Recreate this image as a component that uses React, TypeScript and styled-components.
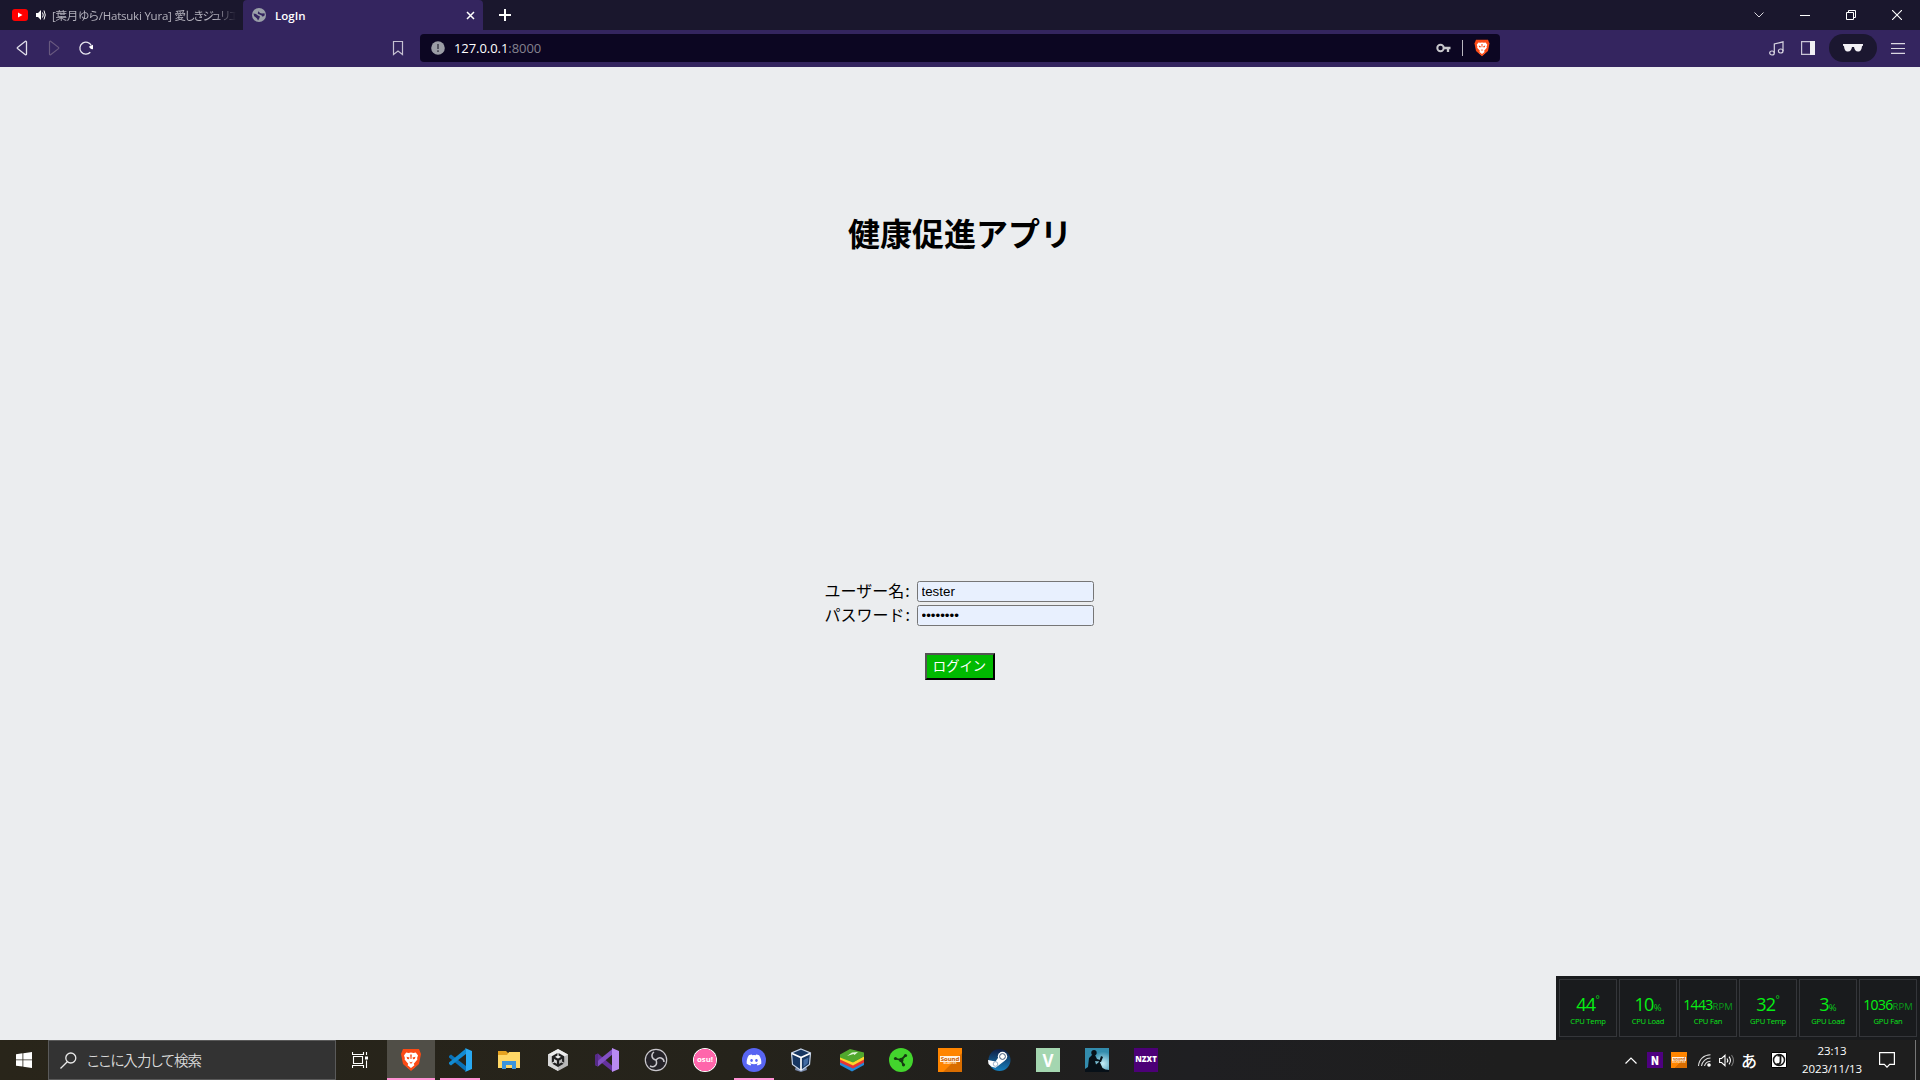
import React from 'react';
import styled, { createGlobalStyle } from 'styled-components';
import { SiBrave, SiUnity } from 'react-icons/si';
import { FaDiscord } from 'react-icons/fa';

const uiFont = '"Open Sans", "Noto Sans CJK JP", sans-serif';
const jpFont = '"Noto Sans CJK JP", sans-serif';

const GlobalStyle = createGlobalStyle`
  * { box-sizing: border-box; }
  body { margin: 0; overflow: hidden; background: #ebedef; font-family: ${uiFont}; }
  svg { display: block; flex: none; }
`;

const Screen = styled.div`
  display: flex;
  flex-direction: column;
  width: 1920px;
  height: 1080px;
  overflow: hidden;
`;

/* ---------- browser chrome ---------- */
const TabStrip = styled.header`
  display: flex;
  height: 30px;
  background: #1a172d;
  color: #fff;
`;
const Tab = styled.div<{ $active?: boolean }>`
  display: flex;
  align-items: center;
  width: ${p => (p.$active ? 240 : 243)}px;
  padding: ${p => (p.$active ? '0 8px 0 9px' : '0 7px 0 12px')};
  background: ${p => (p.$active ? '#34255f' : 'transparent')};
  border-radius: 4px 4px 0 0;
  font-size: 11.5px;
`;
const TabTitle = styled.span<{ $active?: boolean }>`
  flex: 1;
  overflow: hidden;
  white-space: nowrap;
  margin-left: ${p => (p.$active ? 9 : 6)}px;
  padding-top: 1px;
  line-height: 18px;
  font-weight: ${p => (p.$active ? 600 : 400)};
  color: ${p => (p.$active ? '#fff' : '#b4b2bd')};
  letter-spacing: ${p => (p.$active ? '0' : '-0.22px')};
  font-feature-settings: 'palt';
  mask-image: ${p => (p.$active ? 'none' : 'linear-gradient(to right, #000 88%, transparent)')};
`;
const Kana = styled.span`
  letter-spacing: -1.1px;
`;
const NewTab = styled.button`
  display: flex;
  align-items: center;
  justify-content: center;
  width: 44px;
  border: 0;
  padding: 0;
  background: none;
`;
const WindowControls = styled.div`
  display: flex;
  align-items: center;
  margin-left: auto;
`;
const WindowButton = styled.button`
  display: flex;
  align-items: center;
  justify-content: center;
  width: 46px;
  height: 28px;
  border: 0;
  padding: 0;
  background: none;
`;
const Toolbar = styled.nav`
  display: flex;
  align-items: center;
  height: 37px;
  padding: 0 15px 1px 14px;
  background: #34255f;
`;
const NavIcons = styled.div`
  display: flex;
  align-items: center;
  gap: 16px;
  width: 375px;
`;
const BookmarkSlot = styled.div`
  width: 31px;
`;
const AddressBar = styled.div`
  display: flex;
  align-items: center;
  width: 1080px;
  height: 28px;
  padding: 0 9px 0 11px;
  border-radius: 4px;
  background: #0c0622;
`;
const Url = styled.span`
  margin-left: 9px;
  flex: 1;
  color: #fff;
  font-size: 13px;
  line-height: 20px;
  letter-spacing: -0.06px;
  em { font-style: normal; color: #85828f; }
`;
const Divider = styled.span`
  width: 1px;
  height: 16px;
  margin: 0 10px 0 11px;
  background: #b9b7c0;
`;
const ToolbarEnd = styled.div`
  display: flex;
  align-items: center;
  margin-left: auto;
`;
const PrivatePill = styled.div`
  display: flex;
  align-items: center;
  justify-content: center;
  width: 48px;
  height: 28px;
  margin: 0 14px;
  border-radius: 14px;
  background: #1b1730;
`;

/* ---------- page ---------- */
const Page = styled.main`
  display: flex;
  flex-direction: column;
  align-items: center;
  height: 973px;
  background: #ebedef;
  color: #000;
  font-family: ${jpFont};
`;
const Title = styled.h1`
  margin: 142px 0 0;
  font-size: 32px;
  line-height: 46px;
  font-weight: 700;
`;
const LoginForm = styled.form`
  display: flex;
  flex-direction: column;
  align-items: center;
  margin-top: 325px;
`;
const Field = styled.label`
  display: flex;
  align-items: center;
  height: 24px;
  padding: 0 2px 1px 0;
  font-size: 16px;
  font-weight: 400;
  span { width: 92px; white-space: nowrap; line-height: 20px; padding-bottom: 4px; }
  span i { font-style: normal; margin-left: 1px; }
`;
const Input = styled.input`
  width: 177px;
  height: 21px;
  padding: 1px 3px 1px 4px;
  border: 1px solid #767676;
  border-radius: 2.5px;
  background: #e8f0fe;
  color: #000;
  font: 13.333px "Liberation Sans", sans-serif;
  outline: none;
`;
const Submit = styled.button`
  width: 70px;
  height: 27px;
  margin-top: 25px;
  padding: 0 1px 1px 0;
  border: 2px outset #000;
  background: #00ba00;
  color: #fff;
  font: 400 13.333px/20px ${jpFont};
`;

/* ---------- sensor overlay ---------- */
const Sensors = styled.aside`
  position: absolute;
  left: 1556px;
  top: 976px;
  display: flex;
  gap: 2px;
  width: 364px;
  height: 64px;
  padding: 3px;
  background: #191b1d;
`;
const Sensor = styled.div`
  display: flex;
  flex-direction: column;
  align-items: center;
  width: 58px;
  height: 58px;
  flex: none;
  padding-top: 14px;
  border: 1px solid #34363a;
  color: #05f013;
  white-space: nowrap;
`;
const Reading = styled.div<{ $small?: boolean }>`
  display: flex;
  align-items: baseline;
  height: 20px;
  font-size: ${p => (p.$small ? 14 : 18)}px;
  line-height: 21px;
  letter-spacing: ${p => (p.$small ? -0.7 : -0.7)}px;
`;
const Unit = styled.span<{ $raised?: boolean; $dim?: boolean }>`
  font-size: ${p => (p.$raised ? 10 : 9.5)}px;
  line-height: 10px;
  letter-spacing: 0;
  align-self: ${p => (p.$raised ? 'flex-start' : 'auto')};
  color: ${p => (p.$dim ? '#0a9a1c' : '#09c81a')};
`;
const SensorLabel = styled.div`
  margin-top: 1px;
  font-size: 7.6px;
  line-height: 12px;
  letter-spacing: -0.2px;
  color: #0ae61a;
`;

/* ---------- taskbar ---------- */
const Taskbar = styled.footer`
  display: flex;
  height: 40px;
  background: linear-gradient(to right, #29251a 0, #25231b 750px, #201f1d 1000px, #1f1f22 1190px, #1e1e1e 1500px);
  color: #fff;
`;
const StartButton = styled.div`
  display: flex;
  align-items: center;
  justify-content: center;
  width: 48px;
`;
const SearchBox = styled.div`
  display: flex;
  align-items: center;
  gap: 10px;
  width: 288px;
  padding-left: 11px;
  border: 1px solid #5a5a5a;
  background: #333;
  color: #dadada;
  font: 350 14.5px/20px ${jpFont};
  font-feature-settings: 'palt';
  letter-spacing: -0.9px;
`;
const TaskView = styled.div`
  display: flex;
  align-items: center;
  justify-content: center;
  width: 51px;
  padding-right: 3px;
`;
const Apps = styled.div`
  display: flex;
  gap: 1px;
`;
const AppSlot = styled.div<{ $state?: 'active' | 'open' }>`
  display: flex;
  align-items: center;
  justify-content: center;
  width: 48px;
  height: 40px;
  background:
    ${p => (p.$state ? 'linear-gradient(#ff91d4, #ff91d4) center bottom / ' + (p.$state === 'active' ? 48 : 40) + 'px 2px no-repeat' : 'none')}
    ${p => (p.$state === 'active' ? ', #504e47' : '')};
`;
const Tile = styled.div<{ $bg: string; $size?: number; $font?: number; $round?: boolean; $heavy?: boolean }>`
  display: flex;
  flex-direction: column;
  align-items: center;
  justify-content: center;
  width: ${p => p.$size ?? 24}px;
  height: ${p => p.$size ?? 24}px;
  border-radius: ${p => (p.$round ? '50%' : 0)};
  background: ${p => p.$bg};
  color: #fff;
  font-weight: ${p => (p.$heavy ? 800 : 700)};
  font-size: ${p => p.$font ?? 8}px;
  line-height: 1;
`;
const SoundTag = styled.span<{ $small?: boolean }>`
  padding: 0 1px;
  background: #fff3e3;
  color: #c55b00;
  font-size: ${p => (p.$small ? 4 : 6)}px;
  line-height: ${p => (p.$small ? 4 : 6)}px;
  & + & { background: none; color: #ffe5c8; font-size: ${p => (p.$small ? 3 : 4.2)}px; line-height: ${p => (p.$small ? 3 : 5)}px; }
`;
const Tray = styled.div`
  display: flex;
  align-items: center;
  margin-left: auto;
`;
const TrayItem = styled.div<{ $w: number }>`
  display: flex;
  align-items: center;
  justify-content: center;
  width: ${p => p.$w}px;
  height: 40px;
  font: 500 16px/20px ${jpFont};
`;
const ActionCenter = styled(TrayItem)`
  padding-right: 11px;
`;
const Clock = styled.div`
  width: 76px;
  text-align: center;
  font-size: 11.5px;
  line-height: 18px;
  letter-spacing: -0.1px;
`;
const DesktopEdge = styled.div`
  width: 5px;
  height: 40px;
  border-left: 1px solid #777;
`;

const BraveIcon = ({ size }: { size: number }) => (
  <svg width={size} height={size} viewBox="0 0 24 24">
    <path d="M5 5h14l1 6-4 8-4 3-4-3-4-8z" fill="#fff" />
    <path d="M4 1h16l2 5-2 10-8 7-8-7L2 6z" fill="#fb4b16" />
    <path d="M7.200 4.500l2.300.5 2.500-.4 2.500.4 2.300-.5 2.200 3-.9 2.500.3 1.500-3.600 4.300.6 1.400L12 20l-3.400-2.800.6-1.400L5.600 11.500l.3-1.500L5 7.500z" fill="#fff" />
    <path d="M7.500 8.800l3 .8-.6 1.600-1.600-.2zM16.500 8.800l-3 .8.6 1.600 1.600-.2zM10.500 13.500L12 14.500l1.500-1-.4 1.600-1.100.7-1.100-.7zM11.200 6.500h1.600L12.500 11h-1z" fill="#fb4b16" />
  </svg>
);
const SoundBlaster = ({ small }: { small?: boolean }) => (
  <Tile $bg="linear-gradient(135deg, #ff8500 60%, #d96d00 61%)" $size={small ? 16 : 24}>
    <SoundTag $small={small}>Sound</SoundTag>
    <SoundTag $small={small}>BLASTER</SoundTag>
  </Tile>
);

const VSCode = () => (
  <svg width="24" height="24" viewBox="0 0 24 24">
    <path d="M1 8l2-1.600L18 18v5.500L1 9.500z" fill="#0a72b8" />
    <path d="M1 16l2 1.600L18 6V.5L1 14.500z" fill="#128bd2" />
    <path d="M17 0l7 3v18l-7 3 1-1.500v-21z" fill="#29a9f2" />
  </svg>
);
const Explorer = () => (
  <svg width="24" height="24" viewBox="0 0 24 24">
    <path d="M1 3h8l2 2H23v15H1z" fill="#e5a220" />
    <path d="M1 7h9l2-3h11v16H1z" fill="#ffd766" />
    <path d="M5 21v-8h14v8h-4v-4H9v4z" fill="#3b94dc" />
  </svg>
);
const Unity = () => (
  <svg width="24" height="24" viewBox="0 0 24 24">
    <path d="M12 1l10 5.500v11L12 23 2 17.500v-11z" fill="#b9b9b9" />
    <path d="M12 1l10 5.500L12 12 2 6.500z" fill="#ededed" />
    <path d="M2 6.500L12 12v11L2 17.500z" fill="#d8d8d8" />
    <svg x="5" y="5" width="14" height="14" viewBox="0 0 24 24"><SiUnity size={24} color="#202020" /></svg>
  </svg>
);
const VisualStudio = () => (
  <svg width="24" height="24" viewBox="0 0 24 24">
    <path d="M0 7l3-1.500L17.500 18v5.500L3 12v3l-3 2z" fill="#64319d" />
    <path d="M0 17l3 1.500L18 6V.5L2.500 13z" fill="#8250c4" />
    <path d="M17 0l7 3v18l-7 3z" fill="#b98af2" />
    <path d="M0 7l3-1.500v13L0 17z" fill="#552a86" />
  </svg>
);
const Obs = () => (
  <svg width="24" height="24" viewBox="0 0 24 24">
    <circle cx="12" cy="12" r="10.700" fill="#252329" stroke="#c9c7cc" strokeWidth="1.200" />
    <g fill="none" stroke="#c9c7cc" strokeWidth="1.500">
      <path d="M12 12C7 11 7 6 10 4" />
      <path d="M12 12c3-4 8-2 8 2" />
      <path d="M12 12c2 5-2 8-6 6" />
    </g>
  </svg>
);
const VirtualBox = () => (
  <svg width="24" height="24" viewBox="2 0 24 24">
    <path d="M7 18h10l1 4-6 2-6-2z" fill="#7889aa" />
    <path d="M12 1l9.500 4-1 11.500L12 22.500 3.500 16.500 2.500 5z" fill="#173762" stroke="#c6d5ea" strokeWidth="1.200" />
    <path d="M3 5.500l9 4 9-4M12 9.500v12.500" fill="none" stroke="#fff" strokeWidth="1.700" />
    <path d="M14.500 12l5-2.500-.8 6-4.200 3.500z" fill="#426ba3" />
  </svg>
);
const BlueStacks = () => (
  <svg width="24" height="24" viewBox="0 0 24 24">
    <path d="M0 13l13 6 11-6v4l-12 6.500L0 17z" fill="#2388d7" />
    <path d="M0 11l13 6 11-6v3.500l-11 6-13-6z" fill="#e83332" />
    <path d="M0 8l13 6 11-6v3.500l-11 6-13-6z" fill="#ffd42c" />
    <path d="M0 6.500l10-5.500 14 3.500v4l-11 6L0 9.500z" fill="#50a82d" />
    <path d="M7 8l5-3.500 6-.5-3.500 3-1-1z" fill="#e5f6dd" />
  </svg>
);
const Razer = () => (
  <svg width="24" height="24" viewBox="0 0 24 24">
    <circle cx="12" cy="12" r="12" fill="#43d52d" />
    <path d="M6 10.500l6 1.500 4.500-4.500M12 12l2.500 5" stroke="#163b12" strokeWidth="1.800" fill="none" />
    <g fill="#163b12"><circle cx="12.300" cy="12" r="2.300" /><circle cx="6.500" cy="10.500" r="1.600" /><circle cx="16.500" cy="7.500" r="1.600" /><circle cx="14.500" cy="16.800" r="1.600" /></g>
  </svg>
);
const Steam = () => (
  <svg width="24" height="24" viewBox="0 0 24 24">
    <defs><linearGradient id="steamBlue" x2="0" y2="1"><stop stopColor="#101d43" /><stop offset="1" stopColor="#147fbd" /></linearGradient></defs>
    <circle cx="12.500" cy="12" r="11" fill="url(#steamBlue)" />
    <path d="M1 12l7.500 1.500L12 8.500l6 4-6.500 5-3 2.200-4-1L1.500 16z" fill="#fff" />
    <circle cx="15.500" cy="8.500" r="4.700" fill="#fff" />
    <circle cx="15.500" cy="8.500" r="2.900" fill="none" stroke="#3c5578" strokeWidth="1" />
    <circle cx="8.500" cy="16" r="2.300" fill="none" stroke="#7595b5" strokeWidth=".7" />
  </svg>
);
const Kindle = () => (
  <svg width="24" height="24" viewBox="0 0 24 24">
    <defs><radialGradient id="dusk" cx=".75" cy=".65"><stop stopColor="#c5eef7" /><stop offset="1" stopColor="#338cad" /></radialGradient></defs>
    <path d="M0 0h24v24H0z" fill="url(#dusk)" />
    <path d="M3 19l1-9 3-3h3l2 4 3 1-.5 1.500-4.500-.5 1 3.500 3.500-3 3 6.500 3 1.500L24 22v2H0v-3zM14 14l2-6 2 1-2 5z" fill="#071018" />
    <circle cx="9" cy="4.700" r="2.700" fill="#071018" />
  </svg>
);

const apps: { icon: React.ReactNode; state?: 'active' | 'open' }[] = [
  { icon: <BraveIcon size={24} />, state: 'active' },
  { icon: <VSCode />, state: 'open' },
  { icon: <Explorer /> },
  { icon: <Unity /> },
  { icon: <VisualStudio /> },
  { icon: <Obs /> },
  { icon: <Tile $bg="radial-gradient(circle closest-side, #ff66ab 91%, #fff 95%)" $round $font={7.8}>osu!</Tile> },
  { icon: <Tile $bg="#5865f2" $round><FaDiscord size={16} /></Tile>, state: 'open' },
  { icon: <VirtualBox /> },
  { icon: <BlueStacks /> },
  { icon: <Razer /> },
  { icon: <SoundBlaster /> },
  { icon: <Steam /> },
  { icon: <Tile $bg="#a4d6b0" $font={17}>V</Tile> },
  { icon: <Kindle /> },
  { icon: <Tile $bg="#4c0077" $font={7.8} $heavy>NZXT</Tile> },
];

const sensors = [
  { value: '44', unit: '°', label: 'CPU Temp' },
  { value: '10', unit: '%', label: 'CPU Load' },
  { value: '1443', unit: 'RPM', label: 'CPU Fan' },
  { value: '32', unit: '°', label: 'GPU Temp' },
  { value: '3', unit: '%', label: 'GPU Load' },
  { value: '1036', unit: 'RPM', label: 'GPU Fan' },
];

export default function App() {
  return (
    <Screen>
      <GlobalStyle />
      <TabStrip>
        <Tab>
          <svg width="16" height="12" viewBox="0 0 16 12"><rect width="16" height="12" rx="3" fill="#f00" /><path d="M6 3.500v5L10.500 6z" fill="#fff" /></svg>
          <svg width="10" height="12" viewBox="0 0 10 12" style={{ marginLeft: 8 }}>
            <path d="M0 4h2l3-3v10L2 8H0z" fill="#fff" /><path d="M6.500 3.500q1.500 2.500 0 5M8 1.500q2.500 4.500 0 9" fill="none" stroke="#fff" />
          </svg>
          <TabTitle>[葉月ゆら/Hatsuki Yura] <Kana>愛しきジュリエ</Kana></TabTitle>
        </Tab>
        <Tab $active>
          <svg width="14" height="14" viewBox="0 0 14 14"><circle cx="7" cy="7" r="7" fill="#9ba0a9" /><path d="M1.500 5.500l2.500.5 2 1.500 2 1-1 2.500-1 1.500-1-2-3-2.500zM8 1.500L6.500 3.200 8 5l2 .5 2.500-.3.300 2-2 1.500-1.500-1.500-3.500-1.500L6 4z" fill="#34255f" /></svg>
          <TabTitle $active>LogIn</TabTitle>
          <svg width="9" height="9" viewBox="0 0 9 9"><path d="M1 1l7 7M8 1L1 8" stroke="#fff" strokeWidth="1.500" /></svg>
        </Tab>
        <NewTab><svg width="12" height="12" viewBox="0 0 12 12"><path d="M6 0v12M0 6h12" stroke="#fff" strokeWidth="2" /></svg></NewTab>
        <WindowControls>
          <WindowButton><svg width="10" height="6" viewBox="0 0 10 6"><path d="M.5.5L5 5 9.500.5" fill="none" stroke="#d8d7dd" /></svg></WindowButton>
          <WindowButton><svg width="10" height="2" viewBox="0 0 10 2"><path d="M0 1.500h10" stroke="#fff" /></svg></WindowButton>
          <WindowButton><svg width="10" height="10" viewBox="0 0 10 10"><path d="M.5 2.500h7v7h-7zM2.500 2.500v-2h7v7h-2" fill="none" stroke="#fff" /></svg></WindowButton>
          <WindowButton><svg width="10" height="10" viewBox="0 0 10 10"><path d="M0 0l10 10M10 0L0 10" stroke="#fff" strokeWidth="1.100" /></svg></WindowButton>
        </WindowControls>
      </TabStrip>

      <Toolbar>
        <NavIcons>
          <svg width="16" height="16" viewBox="0 0 16 16"><path d="M12.500 1.800v12.400a.7.7 0 0 1-1.100.5L3.500 8.600a.8.8 0 0 1 0-1.200l7.900-6.100a.7.7 0 0 1 1.100.5z" fill="none" stroke="#e1dfea" strokeWidth="1.300" /></svg>
          <svg width="16" height="16" viewBox="0 0 16 16"><path d="M3.500 1.800v12.400a.7.7 0 0 0 1.100.5l7.900-6.100a.8.8 0 0 0 0-1.200L4.600 1.300a.7.7 0 0 0-1.100.5z" fill="none" stroke="#68597f" strokeWidth="1.200" /></svg>
          <svg width="16" height="16" viewBox="0 0 16 16"><path d="M12.300 12.200A6 6 0 1 1 13.300 5.500" fill="none" stroke="#e8e6ef" strokeWidth="1.300" /><path d="M10.800 6.800L15 4.800v4.500L13 9z" fill="#fff" /></svg>
        </NavIcons>
        <BookmarkSlot><svg width="17" height="16" viewBox="0 0 17 16"><path d="M4.500 1.500h9v13L9 11l-4.500 3.500z" fill="none" stroke="#c5c0d1" strokeWidth="1.200" /></svg></BookmarkSlot>
        <AddressBar>
          <svg width="14" height="14" viewBox="0 0 14 14"><circle cx="7" cy="7" r="6.800" fill="#9b9da5" /><path d="M7 3v5M7 9.200v1.800" stroke="#3d3b48" strokeWidth="1.500" /></svg>
          <Url>127.0.0.1<em>:8000</em></Url>
          <svg width="15" height="10" viewBox="0 0 15 10"><circle cx="4.500" cy="5" r="3.200" fill="none" stroke="#c8c7cc" strokeWidth="2" /><path d="M7.500 5h7M12 5v4" stroke="#c8c7cc" strokeWidth="2.300" /></svg>
          <Divider />
          <BraveIcon size={18} />
        </AddressBar>
        <ToolbarEnd>
          <svg width="15" height="15" viewBox="0 0 15 15"><g fill="none" stroke="#d8d5e1" strokeWidth="1.200"><ellipse cx="3" cy="12" rx="2.300" ry="2" /><ellipse cx="11.700" cy="10" rx="2.300" ry="2" /><path d="M5.300 12V3L14 .8V10M5.300 5.500" /></g></svg>
          <svg width="14" height="14" viewBox="0 0 14 14" style={{ marginLeft: 17 }}><path d="M.6.6h12.800v12.800H.6z" fill="none" stroke="#c9c5d6" strokeWidth="1.200" /><path d="M9 0h5v14H9z" fill="#f1f0f4" /></svg>
          <PrivatePill><svg width="20" height="8" viewBox="0 0 20 8"><path d="M0 0h20v1.500l-1 .7C18.500 6 17.500 7.500 15 7.500c-2.500 0-3.500-2-4-4.500H9c-.5 2.500-1.500 4.500-4 4.500S1.500 6 1 2.200L0 1.500z" fill="#f3f1f6" /></svg></PrivatePill>
          <svg width="14" height="11" viewBox="0 0 14 11"><path d="M0 .6h14M0 5.500h14M0 10.400h14" stroke="#dad7e2" strokeWidth="1.200" /></svg>
        </ToolbarEnd>
      </Toolbar>

      <Page>
        <Title>健康促進アプリ</Title>
        <LoginForm onSubmit={e => e.preventDefault()}>
          <Field><span>ユーザー名<i>:</i></span><Input type="text" defaultValue="tester" /></Field>
          <Field><span>パスワード<i>:</i></span><Input type="password" defaultValue="testpass" /></Field>
          <Submit type="submit">ログイン</Submit>
        </LoginForm>
      </Page>

      <Sensors>
        {sensors.map(s => (
          <Sensor key={s.label}>
            <Reading $small={s.unit === 'RPM'}>
              {s.value}
              <Unit $raised={s.unit === '°'} $dim={s.unit === 'RPM'}>{s.unit}</Unit>
            </Reading>
            <SensorLabel>{s.label}</SensorLabel>
          </Sensor>
        ))}
      </Sensors>

      <Taskbar>
        <StartButton><svg width="16" height="16" viewBox="0 0 16 16"><path d="M0 2.200L6.500 1.300V7.500H0zM7.300 1.200L16 0v7.500H7.300zM0 8.300h6.500v6.300L0 13.700zM7.300 8.300H16V16l-8.700-1.200z" fill="#fff" /></svg></StartButton>
        <SearchBox>
          <svg width="17" height="17" viewBox="0 0 17 17"><circle cx="10.800" cy="6" r="5" fill="none" stroke="#e8e8e8" strokeWidth="1.300" /><path d="M7.300 9.700L.5 16.500" stroke="#e8e8e8" strokeWidth="1.300" /></svg>
          <span style={{ letterSpacing: undefined }}>ここに入力して検索</span>
        </SearchBox>
        <TaskView><svg width="17" height="16" viewBox="0 0 17 16"><g fill="none" stroke="#fff" strokeWidth="1.100"><path d="M1.500 4.500h9v7h-9zM.5 0v2.500h11V0M.5 16v-2.500h11V16M14.500 0v3M14.500 8.500V16" /></g><path d="M13 4.500h3v3h-3z" fill="#fff" /></svg></TaskView>
        <Apps>{apps.map((a, i) => <AppSlot key={i} $state={a.state}>{a.icon}</AppSlot>)}</Apps>
        <Tray>
          <TrayItem $w={18}><svg width="12" height="7" viewBox="0 0 12 7"><path d="M.5 6.500L6 1l5.500 5.500" fill="none" stroke="#fff" strokeWidth="1.200" /></svg></TrayItem>
          <TrayItem $w={30}><Tile $bg="#4e0080" $size={16} $font={11} $heavy>N</Tile></TrayItem>
          <TrayItem $w={18}><SoundBlaster small /></TrayItem>
          <TrayItem $w={32}><svg width="13" height="13" viewBox="0 0 13 13"><g fill="none" stroke="#ddd" strokeWidth="1.100"><path d="M.5 12C1 5 6 1 12.500.8M3.500 12C4 7.500 8 4 12.500 4M6.500 12c.5-2.500 3-4.500 6-4.800" /></g><circle cx="11" cy="11" r="1.800" fill="#fff" /></svg></TrayItem>
          <TrayItem $w={14}><svg width="16" height="13" viewBox="0 0 16 13"><g fill="none" stroke="#fff" strokeWidth="1.100"><path d="M.6 4.500h2L6 1.300v10.400L2.600 8.500h-2zM8 4.500q1.500 2 0 4M10 2.700q3 3.800 0 7.600" /><path d="M12.500 1q4 5.500 0 11" stroke="#777" /></g></svg></TrayItem>
          <TrayItem $w={30}>あ</TrayItem>
          <TrayItem $w={30}><svg width="16" height="16" viewBox="0 0 16 16"><path d="M.5.5h15v15H.5z" fill="#fff" stroke="#000" /><circle cx="8" cy="8" r="5.500" fill="none" stroke="#171717" strokeWidth="1.500" /><path d="M6.500 3.500h4M9.500 3.500v6c0 2-1.500 3-4 2.500" fill="none" stroke="#171717" strokeWidth="1.800" /></svg></TrayItem>
          <Clock>23:13<br />2023/11/13</Clock>
          <ActionCenter $w={45}><svg width="16" height="16" viewBox="0 0 16 16"><path d="M.6.6h14.800v11.800h-4.700L8 15.200l-2.700-2.800H.6z" fill="none" stroke="#fff" strokeWidth="1.200" /></svg></ActionCenter>
          <DesktopEdge />
        </Tray>
      </Taskbar>
    </Screen>
  );
}
